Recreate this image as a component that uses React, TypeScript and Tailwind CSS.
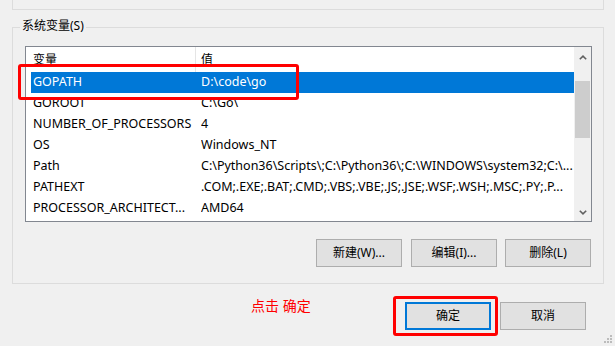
import React from "react";

const rows: { name: string; value: string; selected?: boolean }[] = [
  { name: "GOPATH", value: "D:\\code\\go", selected: true },
  { name: "GOROOT", value: "C:\\Go\\" },
  { name: "NUMBER_OF_PROCESSORS", value: "4" },
  { name: "OS", value: "Windows_NT" },
  { name: "Path", value: "C:\\Python36\\Scripts\\;C:\\Python36\\;C:\\WINDOWS\\system32;C:\\..." },
  { name: "PATHEXT", value: ".COM;.EXE;.BAT;.CMD;.VBS;.VBE;.JS;.JSE;.WSF;.WSH;.MSC;.PY;.P..." },
  { name: "PROCESSOR_ARCHITECT...", value: "AMD64" },
];

function Btn({ label, className = "" }: { label: string; className?: string }) {
  return (
    <div
      className={
        "w-[86px] h-[28px] bg-[#e1e1e1] border border-[#adadad] flex items-center justify-center text-[12px] text-black " +
        className
      }
    >
      {label}
    </div>
  );
}

export default function App() {
  return (
    <div
      className="relative w-[615px] h-[347px] bg-[#f0f0f0] overflow-hidden flex flex-col text-black"
      style={{ fontFamily: '"Noto Sans", "Noto Sans CJK SC", sans-serif' }}
    >
      {/* top group box remnant */}
      <div className="ml-[12px] w-[592px] h-[10px] border-x border-b border-[#dcdcdc]" />

      {/* system variables group box */}
      <div className="relative mt-[17px] ml-[12px] w-[592px] h-[257px] border border-[#dcdcdc] pt-[18px] pl-[12px]">
        <div className="absolute left-[7px] top-[-10px] px-[2px] bg-[#f0f0f0] text-[12px] leading-[16px]">
          系统变量(S)
        </div>

        {/* list view */}
        <div className="w-[567px] h-[176px] border border-[#828790] bg-white flex">
          <div className="flex-1 flex flex-col text-[12.5px]">
            <div className="h-[25px] flex items-center text-[12px]">
              <div className="w-[170px] h-full border-r border-[#e5e5e5] pl-[7px] flex items-center">变量</div>
              <div className="pl-[5px]">值</div>
            </div>
            {rows.map((r) => (
              <div
                key={r.name}
                className={
                  "ml-[5px] h-[21px] flex items-center whitespace-nowrap " +
                  (r.selected ? "bg-[#0078d7] text-white" : "")
                }
              >
                <div className="w-[170px] pl-[2px] overflow-hidden">{r.name}</div>
                <div className="flex-1 overflow-hidden">{r.value}</div>
              </div>
            ))}
          </div>
          {/* scrollbar */}
          <div className="w-[17px] bg-[#f0f0f0] flex flex-col">
            <div className="h-[20px] flex items-center justify-center">
              <svg width="8" height="5" viewBox="0 0 8 5">
                <path d="M0.8 4.3 L4 1.2 L7.2 4.3" fill="none" stroke="#606060" strokeWidth="1.6" />
              </svg>
            </div>
            <div className="flex-1">
              <div className="mt-[14px] mx-[1px] h-[57px] bg-[#cdcdcd]" />
            </div>
            <div className="h-[18px] flex items-center justify-center">
              <svg width="8" height="5" viewBox="0 0 8 5">
                <path d="M0.8 0.7 L4 3.8 L7.2 0.7" fill="none" stroke="#606060" strokeWidth="1.6" />
              </svg>
            </div>
          </div>
        </div>

        {/* buttons */}
        <div className="mt-[17px] ml-[291px] flex">
          <Btn label="新建(W)..." />
          <Btn label="编辑(I)..." className="ml-[9px]" />
          <Btn label="删除(L)" className="ml-[8px]" />
        </div>
      </div>

      {/* bottom row */}
      <div className="mt-[18px] flex items-start">
        <div className="ml-[251px] mt-[-6px] text-[14px] leading-[20px] text-[#ff0000]">点击 确定</div>
        <div className="ml-auto mr-[29px] flex">
          <div className="w-[86px] h-[28px] bg-[#e1e1e1] border-2 border-[#0078d7] flex items-center justify-center text-[12px]">
            确定
          </div>
          <Btn label="取消" className="ml-[9px]" />
        </div>
      </div>

      <div className="mt-auto h-[1px] bg-white" />

      {/* annotations */}
      <div className="absolute left-[18px] top-[64px] w-[281px] h-[36px] border-[3px] border-[#ff0000] rounded-[3px]" />
      <div className="absolute left-[393px] top-[296px] w-[105px] h-[40px] border-[3px] border-[#ff0000] rounded-[3px]" />

      {/* size grip */}
      <svg className="absolute right-[2px] bottom-[3px]" width="9" height="9" viewBox="0 0 9 9">
        <rect x="6" y="0" width="2" height="2" fill="#bcbcbc" />
        <rect x="3" y="3" width="2" height="2" fill="#bcbcbc" />
        <rect x="6" y="3" width="2" height="2" fill="#bcbcbc" />
        <rect x="0" y="6" width="2" height="2" fill="#bcbcbc" />
        <rect x="3" y="6" width="2" height="2" fill="#bcbcbc" />
        <rect x="6" y="6" width="2" height="2" fill="#bcbcbc" />
      </svg>
    </div>
  );
}
